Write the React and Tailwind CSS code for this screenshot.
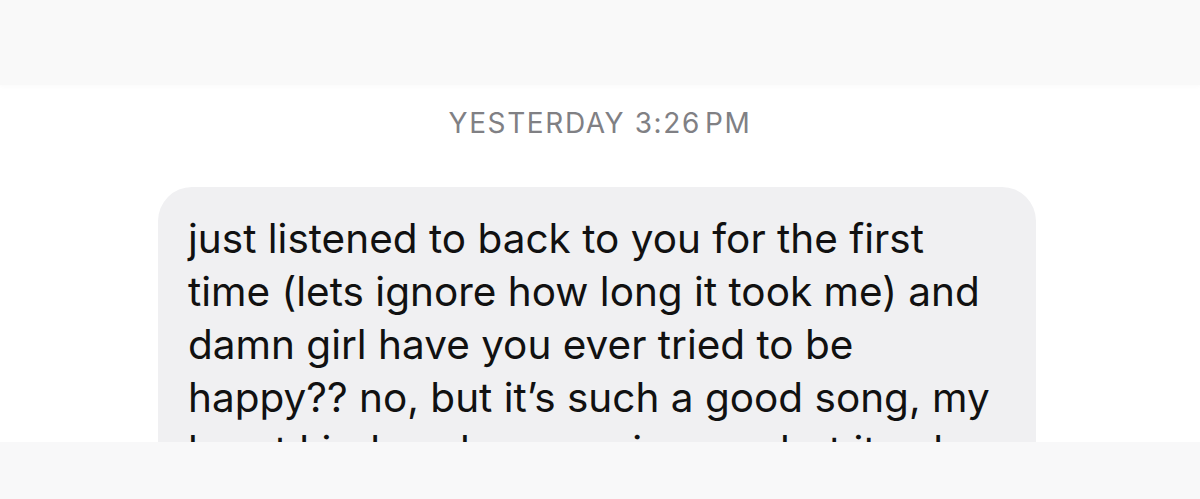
import React from 'react';

const lines = [
  'just listened to back to you for the first',
  'time (lets ignore how long it took me) and',
  'damn girl have you ever tried to be',
  'happy?? no, but it\u2019s such a good song, my',
  'heart kinda aches now i guess but its ok',
];

const App = () => {
  return (
    <div
      className="flex h-[499px] w-[1200px] flex-col overflow-hidden bg-white"
      style={{ fontFamily: 'Inter, "Noto Sans", sans-serif' }}
    >
      {/* Top bar */}
      <div className="h-[85px] shrink-0 bg-[#f9f9f9] shadow-[0_2px_4px_rgba(0,0,0,0.02)]" />

      {/* Conversation */}
      <div className="flex min-h-0 flex-1 flex-col items-start overflow-hidden">
        <div className="w-full pt-[22px] text-center text-[28px] leading-[32px] tracking-[1.6px] text-[#808084]">
          YESTERDAY 3:26&#8202;PM
        </div>
        <div className="ml-[158px] mt-[48px] w-[878px] shrink-0 rounded-[34px] bg-[#f0f0f2] pl-[30px] pr-[30px] pt-[25px] pb-[20px]">
          <p className="text-[40.5px] leading-[53px] text-[#111111]">
            {lines.map((line, i) => (
              <span key={i} className="block whitespace-nowrap">
                {line}
              </span>
            ))}
          </p>
        </div>
      </div>

      {/* Bottom bar */}
      <div className="h-[57px] shrink-0 bg-[#f8f8f9]" />
    </div>
  );
};

export default App;
